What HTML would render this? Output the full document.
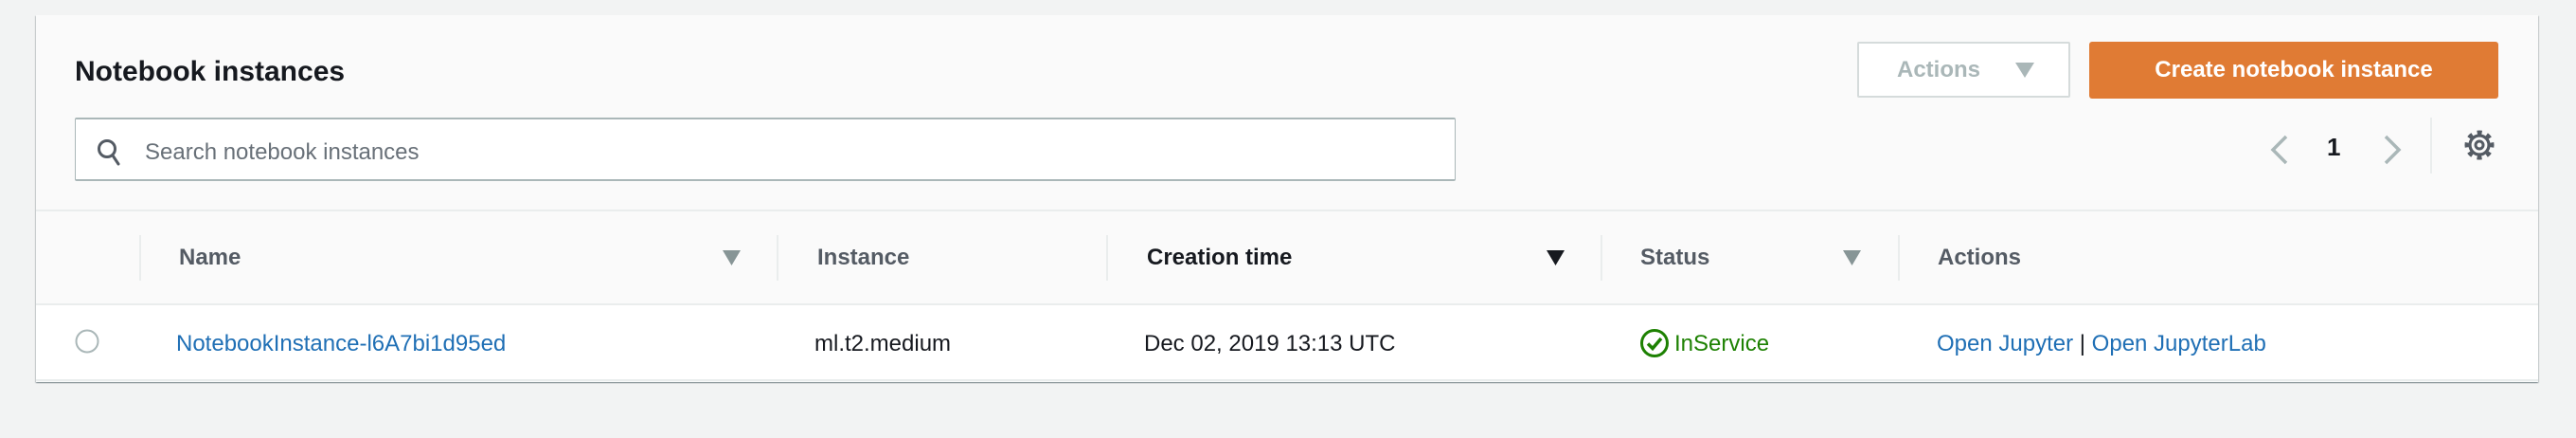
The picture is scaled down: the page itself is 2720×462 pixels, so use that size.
<!DOCTYPE html>
<html><head><meta charset="utf-8"><style>
*{margin:0;padding:0;box-sizing:border-box}
body{width:2720px;height:462px;background:#f2f3f3;font-family:"Liberation Sans",sans-serif;position:relative;overflow:hidden;color:#16191f}
.a{position:absolute;white-space:nowrap}
.panel{position:absolute;left:38px;top:16px;width:2642px;height:387px;background:#fafafa;box-shadow:0 1px 1px 0 rgba(0,28,36,.3),1px 1px 1px 0 rgba(0,28,36,.15),-1px 1px 1px 0 rgba(0,28,36,.15)}
.t{font-size:24px;line-height:28px}
.h{font-weight:bold;color:#545b64}
.lnk{color:#1f6fb5}
.sep{position:absolute;width:2px;background:#eaeded;top:248px;height:48px}
</style></head><body>
<div class="panel"></div>
<div class="a" style="left:38px;top:221px;width:2642px;height:2px;background:#eaeded"></div>
<div class="a" style="left:38px;top:320px;width:2642px;height:2px;background:#eaeded"></div>
<div class="a" style="left:38px;top:322px;width:2642px;height:78px;background:#fff"></div>
<div class="a" style="left:38px;top:400px;width:2642px;height:2px;background:#eaeded"></div>

<div class="a" style="left:79px;top:57px;font-size:30px;font-weight:bold;line-height:38px">Notebook instances</div>

<div class="a" style="left:79px;top:124px;width:1458px;height:67px;background:#fff;border:1px solid #aab7b8;border-top:2px solid #aab7b8;border-bottom:2px solid #aab7b8;border-radius:2px"></div>
<svg class="a" style="left:101px;top:145px" width="32" height="34" viewBox="0 0 32 34"><circle cx="12" cy="12" r="8.5" fill="none" stroke="#545b64" stroke-width="3"/><line x1="18" y1="19" x2="24" y2="28" stroke="#545b64" stroke-width="3" stroke-linecap="round"/></svg>
<div class="a t" style="left:153px;top:147px;color:#687078">Search notebook instances</div>

<div class="a" style="left:1961px;top:44px;width:225px;height:59px;background:#fff;border:2px solid #d5dbdb;border-radius:2px"></div>
<div class="a t" style="left:2003px;top:60px;font-weight:bold;color:#aab7b8">Actions</div>
<svg class="a" style="left:2128px;top:66px" width="20" height="16"><polygon points="0,0 20,0 10,16" fill="#aab7b8"/></svg>
<div class="a" style="left:2206px;top:44px;width:432px;height:60px;background:#e07b34;border-radius:3px"></div>
<div class="a t" style="left:2206px;top:60px;width:432px;text-align:center;font-weight:bold;color:#fff">Create notebook instance</div>

<svg class="a" style="left:2395px;top:141px" width="24" height="34"><polyline points="19,3 5,17 19,31" fill="none" stroke="#aab7b8" stroke-width="3.5"/></svg>
<div class="a" style="left:2457px;top:140px;font-size:26px;font-weight:bold;line-height:30px">1</div>
<svg class="a" style="left:2514px;top:141px" width="24" height="34"><polyline points="5,3 19,17 5,31" fill="none" stroke="#aab7b8" stroke-width="3.5"/></svg>
<div class="a" style="left:2566px;top:124px;width:2px;height:59px;background:#eaeded"></div>
<svg class="a" style="left:2601px;top:136px" width="34" height="34" viewBox="-17 -17 34 34">
<circle r="13.5" fill="none" stroke="#545b64" stroke-width="4" stroke-dasharray="5 5.6" transform="rotate(-11)"/>
<circle r="10" fill="none" stroke="#545b64" stroke-width="3.2"/>
<circle r="4" fill="none" stroke="#545b64" stroke-width="3"/></svg>

<div class="sep" style="left:147px"></div>
<div class="sep" style="left:820px"></div>
<div class="sep" style="left:1168px"></div>
<div class="sep" style="left:1690px"></div>
<div class="sep" style="left:2004px"></div>
<div class="a t h" style="left:189px;top:258px">Name</div>
<svg class="a" style="left:763px;top:264px" width="19" height="16"><polygon points="0,0 19,0 9.5,16" fill="#879596"/></svg>
<div class="a t h" style="left:863px;top:258px">Instance</div>
<div class="a t" style="left:1211px;top:258px;font-weight:bold">Creation time</div>
<svg class="a" style="left:1633px;top:264px" width="19" height="16"><polygon points="0,0 19,0 9.5,16" fill="#16191f"/></svg>
<div class="a t h" style="left:1732px;top:258px">Status</div>
<svg class="a" style="left:1946px;top:264px" width="19" height="16"><polygon points="0,0 19,0 9.5,16" fill="#879596"/></svg>
<div class="a t h" style="left:2046px;top:258px">Actions</div>

<svg class="a" style="left:79px;top:347px" width="28" height="28"><circle cx="13" cy="13" r="11.5" fill="#fff" stroke="#aab7b8" stroke-width="2"/></svg>
<div class="a t lnk" style="left:186px;top:349px">NotebookInstance-l6A7bi1d95ed</div>
<div class="a t" style="left:860px;top:349px;color:#16191f">ml.t2.medium</div>
<div class="a t" style="left:1208px;top:349px;color:#16191f">Dec 02, 2019 13:13 UTC</div>
<svg class="a" style="left:1731px;top:346px" width="32" height="32"><circle cx="16" cy="16" r="13.5" fill="none" stroke="#1d8102" stroke-width="3"/><polyline points="9,16.5 14,21.5 23,11" fill="none" stroke="#1d8102" stroke-width="3.5"/></svg>
<div class="a t" style="left:1768px;top:349px;color:#1d8102">InService</div>
<div class="a t" style="left:2045px;top:349px"><span class="lnk">Open Jupyter</span> <span style="color:#16191f">|</span> <span class="lnk">Open JupyterLab</span></div>
</body></html>
